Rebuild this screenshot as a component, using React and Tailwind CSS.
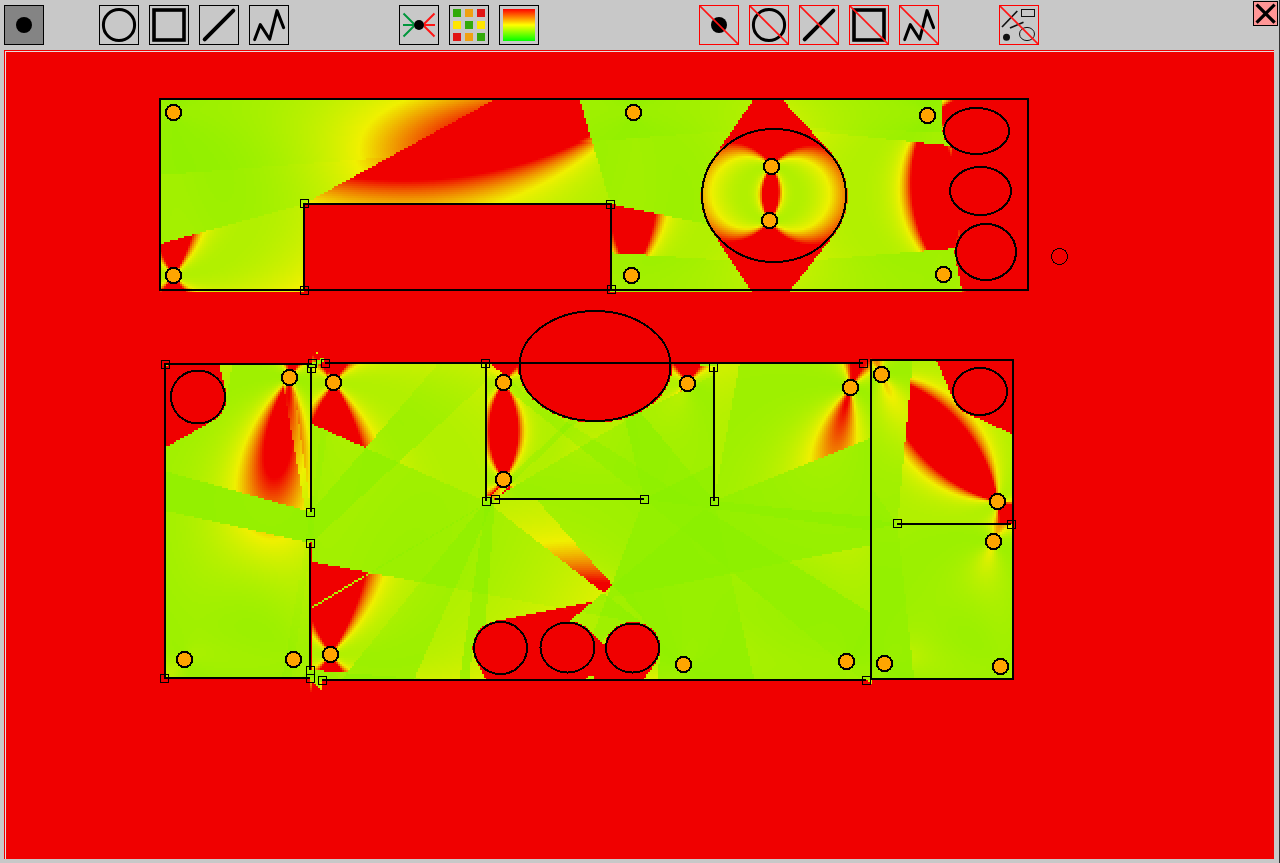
import React from "react";

const BEACONS = [
  [173, 112], [173, 275], [633, 112], [631, 275], [771, 166], [769, 220],
  [927, 115], [943, 274], [289, 377], [333, 382], [184, 659], [293, 659],
  [330, 654], [503, 382], [503, 479], [687, 383], [850, 387], [683, 664],
  [846, 661], [881, 374], [997, 501], [993, 541], [884, 663], [1000, 666],
];

const ELLIPSES = [
  [774, 195.5, 72, 66.5],
  [976.5, 131, 32.5, 23],
  [980.5, 191, 30.5, 24],
  [986, 252, 30, 28],
  [198, 397, 27, 26.5],
  [595, 366, 75.5, 55],
  [500.5, 648, 26.5, 26],
  [567.5, 647.5, 27, 25],
  [632.5, 648, 26.5, 24.5],
  [980, 391.5, 27, 23.5],
];

const RECTS = [
  [160, 99, 1028, 290],
  [871, 360, 1013, 679],
];

const POLYLINES = [
  [[304, 290], [304, 204], [611, 204], [611, 290]],
  [[312, 364], [165, 364], [165, 678], [310, 678]],
];

const LINES = [
  [311, 368, 311, 512],
  [310, 543, 310, 670],
  [325, 363, 863, 363],
  [486, 363, 486, 501],
  [495, 499, 644, 499],
  [714, 367, 714, 501],
  [322, 680, 866, 680],
  [897, 524, 1011, 524],
];

const HANDLES = [
  [304, 203], [304, 290], [610, 204], [611, 289],
  [312, 363], [165, 364], [164, 678], [310, 678],
  [311, 368], [310, 512], [310, 543], [310, 670],
  [325, 363], [863, 363], [485, 363], [486, 501],
  [495, 499], [644, 499], [713, 367], [714, 501],
  [322, 680], [866, 680], [897, 523], [1011, 524],
];

// Obstacles that block the line of sight, with sub-pixel end points.
const WALLS = [
  [311, 368, 311, 512],
  [311, 543, 311, 670],
  [325, 363, 863, 363],
  [486, 363, 486, 501.3],
  [494.9, 499, 644, 499],
  [714, 367, 714, 501],
  [322, 680, 866, 680],
  [897.5, 524, 1011, 524],
  [304, 292, 304, 204],
  [304, 204, 610.5, 204],
  [610.5, 204, 611, 292],
  [312, 364, 165, 364],
  [165, 364, 165, 678],
  [165, 678, 310, 678],
  ...RECTS.flatMap(([l, t, r, b]) => [
    [l, t, r, t],
    [r, t, r, b + 1.5],
    [l, b + 1.5, r, b + 1.5],
    [l, t, l, b + 1.5],
  ]),
];

const ROUND_WALLS = ELLIPSES.map(([cx, cy, rx, ry]) => [cx + 0.2, cy, rx + 1.3, ry + 1.3]);

function crossesSegment(px, py, bx, by, s) {
  const rx = bx - px, ry = by - py;
  const sx = s[2] - s[0], sy = s[3] - s[1];
  const d = rx * sy - ry * sx;
  if (d === 0) return false;
  const qx = s[0] - px, qy = s[1] - py;
  const t = (qx * sy - qy * sx) / d;
  if (t < 0 || t > 1) return false;
  const u = (qx * ry - qy * rx) / d;
  return u >= 0 && u <= 1;
}

function crossesEllipse(px, py, bx, by, e) {
  const x = (px - e[0]) / e[2], y = (py - e[1]) / e[3];
  const dx = (bx - px) / e[2], dy = (by - py) / e[3];
  const a = dx * dx + dy * dy;
  const b = x * dx + y * dy;
  const c = x * x + y * y - 1;
  const disc = b * b - a * c;
  if (disc < 0) return false;
  const q = Math.sqrt(disc);
  const t1 = (-b - q) / a, t2 = (-b + q) / a;
  return (t1 >= 0 && t1 <= 1) || (t2 >= 0 && t2 <= 1);
}

function isVisible(px, py, bx, by) {
  for (const s of WALLS) if (crossesSegment(px, py, bx, by, s)) return false;
  for (const e of ROUND_WALLS) if (crossesEllipse(px, py, bx, by, e)) return false;
  return true;
}

// Horizontal dilution of precision over the beacons in line of sight.
function dilution(px, py) {
  let n = 0, xx = 0, xy = 0, yy = 0;
  for (const [x, y] of BEACONS) {
    const bx = x + 0.6, by = y + 0.6;
    if (!isVisible(px, py, bx, by)) continue;
    const dx = bx - px, dy = by - py;
    const d2 = dx * dx + dy * dy;
    if (d2 === 0) continue;
    n++;
    xx += (dx * dx) / d2;
    xy += (dx * dy) / d2;
    yy += (dy * dy) / d2;
  }
  if (n < 2) return Infinity;
  const det = xx * yy - xy * xy;
  return det < 1e-9 ? Infinity : Math.sqrt(n / det);
}

const GOOD = 1.87;
const BAD = 2.6;

function cellColor(h) {
  if (h >= BAD) return null;
  if (h <= GOOD) return `rgb(${Math.round((130 + 110 * Math.pow(h / GOOD, 3)) / 2) * 2},240,0)`;
  return `rgb(240,${Math.round((((BAD - h) / (BAD - GOOD)) * 240) / 2) * 2},0)`;
}

function buildField() {
  const paths = new Map();
  const add = (color, x, y, w) => {
    if (!color) return;
    const part = `M${x} ${y}h${w}v2h${-w}z`;
    const list = paths.get(color);
    if (list) list.push(part);
    else paths.set(color, [part]);
  };
  for (const [x0, y0, x1, y1] of [[156, 96, 1032, 296], [156, 340, 1018, 692]]) {
    for (let y = y0; y < y1; y += 2) {
      let start = x0, current = null;
      for (let x = x0; x < x1; x += 2) {
        const color = cellColor(dilution(x + 1, y + 1));
        if (color !== current) {
          add(current, start, y, x - start);
          start = x;
          current = color;
        }
      }
      add(current, start, y, x1 - start);
    }
  }
  return [...paths].map(([color, parts]) => [color, parts.join("")]);
}

const FIELD = buildField();

function Plan() {
  return (
    <svg
      className="block h-full w-full"
      viewBox="4 50 1270 809"
      shapeRendering="crispEdges"
      fill="none"
      stroke="#000"
    >
      <rect x="4" y="50" width="1270" height="809" fill="#f00000" stroke="none" />
      <path d="M5 859V51H1274V52H6V859z" fill="#e6dcdc" stroke="none" />
      <g stroke="none">
        {FIELD.map(([color, d]) => (
          <path key={color} d={d} fill={color} />
        ))}
      </g>
      <g strokeWidth="2">
        {RECTS.map(([l, t, r, b]) => (
          <rect key={l} x={l} y={t} width={r - l} height={b - t} />
        ))}
        {POLYLINES.map((p, i) => (
          <polyline key={i} points={p.map((q) => q.join(",")).join(" ")} />
        ))}
        {LINES.map(([a, b, c, d], i) => (
          <line key={i} x1={a} y1={b} x2={c} y2={d} />
        ))}
        {ELLIPSES.map(([cx, cy, rx, ry], i) => (
          <ellipse key={i} cx={cx} cy={cy} rx={rx} ry={ry} />
        ))}
        {BEACONS.map(([x, y], i) => (
          <circle key={i} cx={x + 0.5} cy={y + 0.5} r="7.6" fill="#ffa500" />
        ))}
      </g>
      {HANDLES.map(([x, y], i) => (
        <rect key={i} x={x - 3.5} y={y - 3.5} width="8" height="8" />
      ))}
      <circle cx="1059.5" cy="256.5" r="8" />
    </svg>
  );
}

const Dot = () => <circle cx="20" cy="20" r="8" fill="#000" />;
const Ring = () => <circle cx="20" cy="20" r="15.6" stroke="#000" strokeWidth="3" />;
const Box = () => <rect x="5" y="5" width="30" height="30" stroke="#000" strokeWidth="3.6" />;
const Slope = () => (
  <path d="M5.7 34.3L34.3 5.7" stroke="#000" strokeWidth="4" strokeLinecap="round" />
);
const Zigzag = () => (
  <path
    d="M5.7 34.6L11.3 19.6L20.7 34.2L28 5.6L34.6 22.6"
    stroke="#000"
    strokeWidth="3"
    strokeLinecap="round"
    strokeLinejoin="round"
  />
);

const Rays = () => (
  <g strokeWidth="2">
    <path d="M4.5 8.5L15 19M4 20H15M4.5 31.5L15 21" stroke="#00963c" />
    <path d="M35.5 8.5L25 19M36 20H25M35.5 31.5L25 21" stroke="#ff1414" />
    <circle cx="20" cy="20" r="5" fill="#000" />
  </g>
);

const SWATCHES = [
  ["#32aa0a", "#f0a010", "#e11414"],
  ["#ffe600", "#32aa0a", "#ffe600"],
  ["#e11414", "#f0a010", "#32aa0a"],
];

const Swatches = () => (
  <g>
    {SWATCHES.map((row, r) =>
      row.map((c, i) => (
        <rect key={`${r}-${i}`} x={4 + i * 12} y={4 + r * 12} width="8" height="8" fill={c} />
      ))
    )}
  </g>
);

const Heat = () => (
  <g>
    <defs>
      <linearGradient id="heat" x1="0" y1="0" x2="0" y2="1">
        <stop offset="0" stopColor="#ff0000" />
        <stop offset="0.5" stopColor="#ffff00" />
        <stop offset="1" stopColor="#00ff00" />
      </linearGradient>
    </defs>
    <rect x="4" y="4" width="32" height="32" fill="url(#heat)" />
  </g>
);

const Everything = () => (
  <g stroke="#111">
    <path d="M3 22L18.3 6M11 23L24.5 17.2" strokeWidth="1.7" />
    <rect x="22.5" y="4.5" width="13" height="7" />
    <circle cx="7.5" cy="32.3" r="3.5" fill="#111" stroke="none" />
    <ellipse cx="28" cy="29" rx="7.5" ry="6.6" />
  </g>
);

function Tool({ label, active, remove, children }) {
  return (
    <button
      aria-label={label}
      className={`block size-10 shrink-0 ${active ? "bg-[#848484]" : "bg-[#c8c8c8]"}`}
    >
      <svg className="block size-10" viewBox="0 0 40 40" fill="none">
        {children}
        {remove && <path d="M0.5 0.5L39.5 39.5" stroke="#ff1414" strokeWidth="1.6" />}
        <rect
          x="0.5"
          y="0.5"
          width="39"
          height="39"
          stroke={remove ? "#ff0000" : "#000000"}
        />
      </svg>
    </button>
  );
}

export default function App() {
  return (
    <div className="flex h-[863px] w-[1280px] flex-col overflow-hidden border-r border-[#323232] bg-[#c8c8c8]">
      <header className="flex h-[50px] shrink-0 items-start pl-1 pr-px">
        <div className="flex pt-[5px]">
          <Tool label="Add beacon" active><Dot /></Tool>
          <div className="ml-[55px] flex gap-2.5">
            <Tool label="Add circle"><Ring /></Tool>
            <Tool label="Add rectangle"><Box /></Tool>
            <Tool label="Add line"><Slope /></Tool>
            <Tool label="Add polyline"><Zigzag /></Tool>
          </div>
          <div className="ml-[110px] flex gap-2.5">
            <Tool label="Visibility"><Rays /></Tool>
            <Tool label="Grid"><Swatches /></Tool>
            <Tool label="Gradient"><Heat /></Tool>
          </div>
          <div className="ml-40 flex gap-2.5">
            <Tool label="Remove beacons" remove><Dot /></Tool>
            <Tool label="Remove circles" remove><Ring /></Tool>
            <Tool label="Remove lines" remove><Slope /></Tool>
            <Tool label="Remove rectangles" remove><Box /></Tool>
            <Tool label="Remove polylines" remove><Zigzag /></Tool>
          </div>
          <div className="ml-[60px] flex">
            <Tool label="Remove everything" remove><Everything /></Tool>
          </div>
        </div>
        <button
          aria-label="Close"
          className="ml-auto mt-px block size-[25px] shrink-0 border border-black bg-[#ff9696]"
        >
          <svg className="block size-[23px]" viewBox="0 0 23 23" fill="none">
            <path
              d="M3.7 3.7L19.5 19.5M19.5 3.7L3.7 19.5"
              stroke="#000"
              strokeWidth="3.2"
              strokeLinecap="square"
            />
          </svg>
        </button>
      </header>
      <main className="ml-1 h-[809px] w-[1270px] shrink-0">
        <Plan />
      </main>
    </div>
  );
}
